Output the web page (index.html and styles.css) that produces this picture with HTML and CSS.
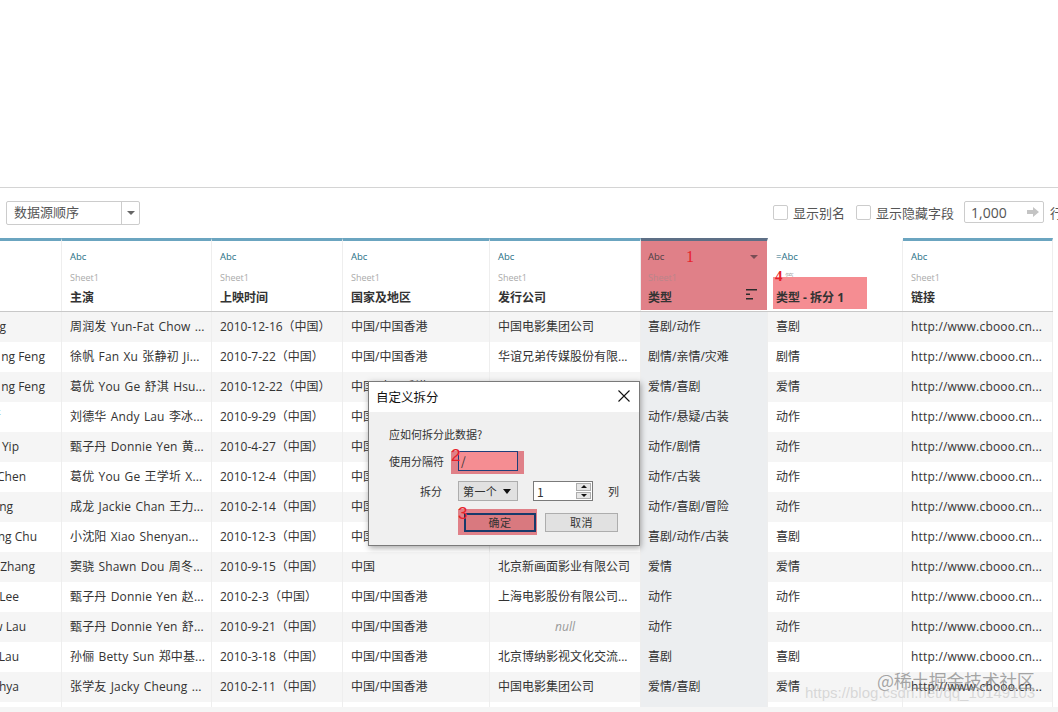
FILE: index.html
```html
<!DOCTYPE html>
<html lang="zh">
<head>
<meta charset="utf-8">
<title>自定义拆分</title>
<link rel="stylesheet" href="styles.css">
</head>
<body>
<div class="page">
  <div class="top"></div>
  <div class="toolbar">
    <div class="select"><span class="select-text">数据源顺序</span><span class="select-btn"><i class="caret"></i></span></div>
    <div class="right">
      <span class="check"></span><span class="check-label">显示别名</span>
      <span class="check second"></span><span class="check-label">显示隐藏字段</span>
      <div class="limit"><span>1,000</span><svg class="arrow" width="12" height="10" viewBox="0 0 12 10"><path d="M0 3h6V0l6 5-6 5V7H0z" fill="#c4c4c4"/></svg></div>
      <span class="row-label">行</span>
    </div>
  </div>

  <div class="table">
    <div class="row head">
      <div class="hc first"></div>
      <div class="hc"><span class="type">Abc</span><span class="src">Sheet1</span><span class="name">主演</span></div>
      <div class="hc"><span class="type">Abc</span><span class="src">Sheet1</span><span class="name">上映时间</span></div>
      <div class="hc"><span class="type">Abc</span><span class="src">Sheet1</span><span class="name">国家及地区</span></div>
      <div class="hc"><span class="type">Abc</span><span class="src">Sheet1</span><span class="name">发行公司</span></div>
      <div class="hc sel">
        <span class="type">Abc</span><span class="src">Sheet1</span><span class="name">类型</span>
        <i class="caret menu"></i>
        <svg class="sort" width="11" height="11" viewBox="0 0 11 11"><path d="M0 0h11v1.500H0zM0 4.500h4V6H0zM0 9h7v1.500H0z" fill="#2b2b2b"/></svg>
        <span class="mark m1">1</span>
      </div>
      <div class="hc calc">
        <span class="type">=Abc</span><span class="src">篇</span><span class="name">类型 - 拆分 1</span>
        <span class="hl"></span><span class="mark m4">4</span>
      </div>
      <div class="hc"><span class="type">Abc</span><span class="src">Sheet1</span><span class="name">链接</span></div>
    </div>

    <div class="row odd"><div class="c first e7">g</div><div class="c l">周润发 Yun-Fat Chow ...</div><div class="c">2010-12-16（中国）</div><div class="c">中国/中国香港</div><div class="c">中国电影集团公司</div><div class="c s">喜剧/动作</div><div class="c">喜剧</div><div class="c u">http://www.cbooo.cn...</div></div>
    <div class="row"><div class="c first e46">ng Feng</div><div class="c l">徐帆 Fan Xu 张静初 Ji...</div><div class="c">2010-7-22（中国）</div><div class="c">中国/中国香港</div><div class="c">华谊兄弟传媒股份有限...</div><div class="c s">剧情/亲情/灾难</div><div class="c">剧情</div><div class="c u">http://www.cbooo.cn...</div></div>
    <div class="row odd"><div class="c first e46">ng Feng</div><div class="c l">葛优 You Ge 舒淇 Hsu...</div><div class="c">2010-12-22（中国）</div><div class="c">中国/中国香港</div><div class="c"></div><div class="c s">爱情/喜剧</div><div class="c">爱情</div><div class="c u">http://www.cbooo.cn...</div></div>
    <div class="row"><div class="c first e2 teal">斯</div><div class="c l">刘德华 Andy Lau 李冰...</div><div class="c">2010-9-29（中国）</div><div class="c">中国/中国香港</div><div class="c"></div><div class="c s">动作/悬疑/古装</div><div class="c">动作</div><div class="c u">http://www.cbooo.cn...</div></div>
    <div class="row odd"><div class="c first e20">Yip</div><div class="c l">甄子丹 Donnie Yen 黄...</div><div class="c">2010-4-27（中国）</div><div class="c">中国/中国香港</div><div class="c"></div><div class="c s">动作/剧情</div><div class="c">动作</div><div class="c u">http://www.cbooo.cn...</div></div>
    <div class="row"><div class="c first e27">Chen</div><div class="c l">葛优 You Ge 王学圻 X...</div><div class="c">2010-12-4（中国）</div><div class="c">中国/中国香港</div><div class="c"></div><div class="c s">动作/古装</div><div class="c">动作</div><div class="c u">http://www.cbooo.cn...</div></div>
    <div class="row odd"><div class="c first e14">ng</div><div class="c l">成龙 Jackie Chan 王力...</div><div class="c">2010-2-14（中国）</div><div class="c">中国/中国香港</div><div class="c"></div><div class="c s">动作/喜剧/冒险</div><div class="c">动作</div><div class="c u">http://www.cbooo.cn...</div></div>
    <div class="row"><div class="c first e38">ng Chu</div><div class="c l">小沈阳 Xiao Shenyan...</div><div class="c">2010-12-3（中国）</div><div class="c">中国/中国香港</div><div class="c"></div><div class="c s">喜剧/动作/古装</div><div class="c">喜剧</div><div class="c u">http://www.cbooo.cn...</div></div>
    <div class="row odd"><div class="c first e36">Zhang</div><div class="c l">窦骁 Shawn Dou 周冬...</div><div class="c">2010-9-15（中国）</div><div class="c">中国</div><div class="c">北京新画面影业有限公司</div><div class="c s">爱情</div><div class="c">爱情</div><div class="c u">http://www.cbooo.cn...</div></div>
    <div class="row"><div class="c first e20">Lee</div><div class="c l">甄子丹 Donnie Yen 赵...</div><div class="c">2010-2-3（中国）</div><div class="c">中国/中国香港</div><div class="c">上海电影股份有限公司...</div><div class="c s">动作</div><div class="c">动作</div><div class="c u">http://www.cbooo.cn...</div></div>
    <div class="row odd"><div class="c first e27">w Lau</div><div class="c l">甄子丹 Donnie Yen 舒...</div><div class="c">2010-9-21（中国）</div><div class="c">中国/中国香港</div><div class="c null">null</div><div class="c s">动作</div><div class="c">动作</div><div class="c u">http://www.cbooo.cn...</div></div>
    <div class="row"><div class="c first e20">Lau</div><div class="c l">孙俪 Betty Sun 郑中基...</div><div class="c">2010-3-18（中国）</div><div class="c">中国/中国香港</div><div class="c">北京博纳影视文化交流...</div><div class="c s">喜剧</div><div class="c">喜剧</div><div class="c u">http://www.cbooo.cn...</div></div>
    <div class="row odd"><div class="c first e20">hya</div><div class="c l">张学友 Jacky Cheung ...</div><div class="c">2010-2-11（中国）</div><div class="c">中国/中国香港</div><div class="c">中国电影集团公司</div><div class="c s">爱情/喜剧</div><div class="c">爱情</div><div class="c u">http://www.cbooo.cn...</div></div>
    <div class="row stub"><div class="c first"></div><div class="c"></div><div class="c"></div><div class="c"></div><div class="c"></div><div class="c s"></div><div class="c"></div><div class="c"></div></div>
    <div class="foot"></div>
  </div>

  <div class="dialog">
    <div class="d-title"><span>自定义拆分</span><svg width="12" height="12" viewBox="0 0 12 12"><path d="M.5.5l11 11M11.500.5l-11 11" stroke="#111" stroke-width="1.100" fill="none"/></svg></div>
    <div class="d-body">
      <div class="d-q">应如何拆分此数据?</div>
      <div class="d-row sep">
        <span class="d-label">使用分隔符</span>
        <span class="d-hl"></span>
        <span class="d-input">/</span>
        <span class="d-mark d2">2</span>
      </div>
      <div class="d-row split">
        <span class="d-label end">拆分</span>
        <span class="d-select"><span>第一个</span><i class="caret black"></i></span>
        <span class="d-spin"><span>1</span><span class="spin-btns"><b><i class="tri up"></i></b><b><i class="tri"></i></b></span></span>
        <span class="d-col">列</span>
      </div>
      <div class="d-row btns">
        <span class="d-hl2"></span>
        <span class="btn ok">确定</span>
        <span class="btn">取消</span>
        <span class="d-mark d3">3</span>
      </div>
    </div>
  </div>

  <div class="wm-a">@稀土掘金技术社区</div>
  <div class="wm-b">https://blog.csdn.net/qq_10149103</div>
</div>
</body>
</html>
```
FILE: styles.css
```css
* { box-sizing: border-box; }
html, body { margin: 0; padding: 0; background: #fff; }
body { font-family: "Open Sans", "Noto Sans CJK SC", sans-serif; color: #333; }
.page { position: relative; width: 1058px; height: 712px; overflow: hidden; }

.top { height: 188px; border-bottom: 1px solid #d4d4d4; }

.toolbar { height: 50px; display: flex; align-items: flex-start; justify-content: space-between; padding: 13px 0 0 6px; }
.select { width: 134px; height: 24px; border: 1px solid #ccc; border-radius: 2px; display: flex; align-items: center; font-size: 13px; line-height: 20px; color: #555; }
.select-text { flex: 1; padding-left: 7px; padding-bottom: 2px; }
.select-btn { width: 18px; height: 22px; border-left: 1px solid #ccc; display: flex; align-items: center; justify-content: center; }
.caret { display: block; width: 0; height: 0; border-left: 4px solid transparent; border-right: 4px solid transparent; border-top: 4px solid #666; }

.right { display: flex; align-items: center; height: 24px; font-size: 13px; color: #555; white-space: nowrap; margin-top: -1px; }
.check { width: 15px; height: 15px; border: 1px solid #ccc; border-radius: 2px; background: #fff; margin-right: 5px; }
.check.second { margin-left: 11px; }
.limit { width: 80px; height: 22px; margin-left: 10px; border: 1px solid #ccc; border-radius: 2px; display: flex; align-items: center; justify-content: space-between; padding: 0 4px 0 6px; font-size: 14px; }
.row-label { margin-left: 6px; width: 8px; }

.row { display: grid; grid-template-columns: 62px 150px 131px 147px 151px 127px 135px 150px; width: 1053px; height: 30px; }
.row.odd { background: #f5f5f5; }
.row.head { height: 74px; background: #fff; border-bottom: 1px solid #c8c8c8; }
.row.stub { height: 5px; }
.foot { height: 5px; background: #f5f5f5; }

.hc { position: relative; display: flex; flex-direction: column; padding: 0 8px; border-top: 3px solid #6ba5c0; border-right: 1px solid #eee; }
.hc.first { padding: 0; }
.type { font-size: 9.500px; line-height: 12px; margin-top: 10px; color: #1f6f85; }
.src { font-size: 9px; line-height: 12px; margin-top: 9px; color: #aaa; }
.name { font-size: 12px; font-weight: 700; line-height: 18px; margin-top: 5px; color: #333; font-family: "Noto Sans", "Noto Sans CJK SC", sans-serif; }

.hc.sel { background: #e08088; border-top: 3px solid #5d6f86; border-right: 1px solid #fff; padding-left: 7px; margin-bottom: 1px; }
.hc.sel .type { color: #4a3f45; }
.hc.sel .src { color: #b9858a; }
.menu { position: absolute; top: 14px; right: 9px; border-top-color: #7a4d55; }
.sort { position: absolute; top: 48px; left: 105px; }
.hc.calc { border-top-color: #fff; }
.hc.calc .name { position: relative; z-index: 1; }
.hc.calc .src { color: #b0b0b0; padding-left: 9px; }
.hl { position: absolute; left: 5px; top: 36px; width: 94px; height: 32px; background: #f58d92; }

.mark { position: absolute; font-family: "Liberation Serif", serif; color: #e8202a; font-weight: 700; z-index: 2; }
.m1 { font-size: 16px; top: 7px; left: 45px; font-weight: 400; }
.m4 { font-size: 15px; top: 27px; left: 7px; }

.c { font-size: 12px; line-height: 30px; padding: 0 8px; border-right: 1px solid #eee; white-space: nowrap; overflow: hidden; color: #333; }
.c.l { letter-spacing: .15px; word-spacing: 1px; }
.c.u { letter-spacing: .2px; }
.c.s { background: #eceef0; padding-left: 7px; }
.c.null { color: #999; font-style: italic; text-align: center; }
.c.first { padding: 0; display: flex; justify-content: flex-end; }
.teal { color: #7fc8c8; }
.e2 { padding-right: 60px !important; }
.e7 { padding-right: 55px !important; }
.e14 { padding-right: 48px !important; }
.e20 { padding-right: 42px !important; }
.e27 { padding-right: 35px !important; }
.e36 { padding-right: 26px !important; }
.e38 { padding-right: 24px !important; }
.e46 { padding-right: 16px !important; }

.dialog { position: absolute; left: 368px; top: 381px; width: 272px; height: 165px; background: #f0f0f0; border: 1px solid #7a7a7a; box-shadow: 1px 2px 6px rgba(0,0,0,.35); font-family: "Noto Sans CJK SC", sans-serif; font-size: 11px; color: #333; }
.d-title { height: 30px; background: #fff; display: flex; align-items: center; justify-content: space-between; padding: 0 9px 2px 7px; font-size: 12.500px; color: #111; }
.d-body { padding: 14px 0 0 20px; }
.d-q { line-height: 16px; }
.d-row { position: relative; display: flex; align-items: center; }
.sep { margin-top: 1px; height: 33px; padding-top: 8px; align-items: flex-start; }
.sep .d-label { line-height: 20px; }
.d-label { width: 69px; }
.d-label.end { text-align: right; padding-right: 16px; }
.d-hl { position: absolute; left: 62px; top: 8px; width: 73px; height: 23px; background: #e08088; }
.d-input { position: relative; width: 60px; height: 20px; background: #f58d92; border: 1px solid #1f3f7a; font-size: 12px; line-height: 18px; padding-left: 2px; color: #333; }
.d-mark { position: absolute; font-family: "Liberation Sans", sans-serif; color: #e8202a; font-size: 17px; line-height: 20px; font-weight: 400; }
.d2 { left: 62px; top: 3px; }
.split { margin-top: 5px; height: 20px; }
.d-select { width: 60px; height: 20px; background: #e1e1e1; border: 1px solid #adadad; display: flex; align-items: center; justify-content: space-between; padding: 0 6px 0 4px; letter-spacing: .4px; }
.caret.black { border-top-color: #111; border-left-width: 4px; border-right-width: 4px; border-top-width: 5px; }
.d-spin { width: 60px; height: 20px; margin-left: 15px; background: #fff; border: 1px solid #7a7a7a; display: flex; align-items: center; justify-content: space-between; padding-left: 3px; font-size: 12px; }
.spin-btns { display: flex; flex-direction: column; width: 15px; height: 16px; margin-right: 1px; gap: 1px; }
.spin-btns b { flex: 1; background: #e6e6e6; border: 1px solid #adadad; display: flex; align-items: center; justify-content: center; }
.tri { display: block; width: 0; height: 0; border-left: 3px solid transparent; border-right: 3px solid transparent; border-top: 3px solid #111; }
.tri.up { border-top: 0; border-bottom: 3px solid #111; }
.d-col { margin-left: 15px; }
.btns { margin-top: 12px; height: 19px; padding-left: 75px; gap: 9px; }
.d-hl2 { position: absolute; left: 69px; top: -4px; width: 79px; height: 26px; background: #e08088; }
.btn { position: relative; width: 73px; height: 19px; background: #e1e1e1; border: 1px solid #adadad; text-align: center; line-height: 17px; font-size: 11px; letter-spacing: .5px; }
.btn.ok { width: 72px; background: #d9797f; border: 2px solid #173a6b; line-height: 15px; }
.d3 { left: 69px; top: -9px; }

.wm-a { position: absolute; left: 877px; top: 669px; font-size: 18px; line-height: 22px; color: rgba(110,110,110,.6); font-family: "Noto Sans CJK SC", sans-serif; white-space: nowrap; letter-spacing: -.4px; }
.wm-b { position: absolute; left: 805px; top: 684px; font-size: 15px; line-height: 18px; color: rgba(190,190,190,.55); font-family: "Liberation Sans", sans-serif; white-space: nowrap; }
```
